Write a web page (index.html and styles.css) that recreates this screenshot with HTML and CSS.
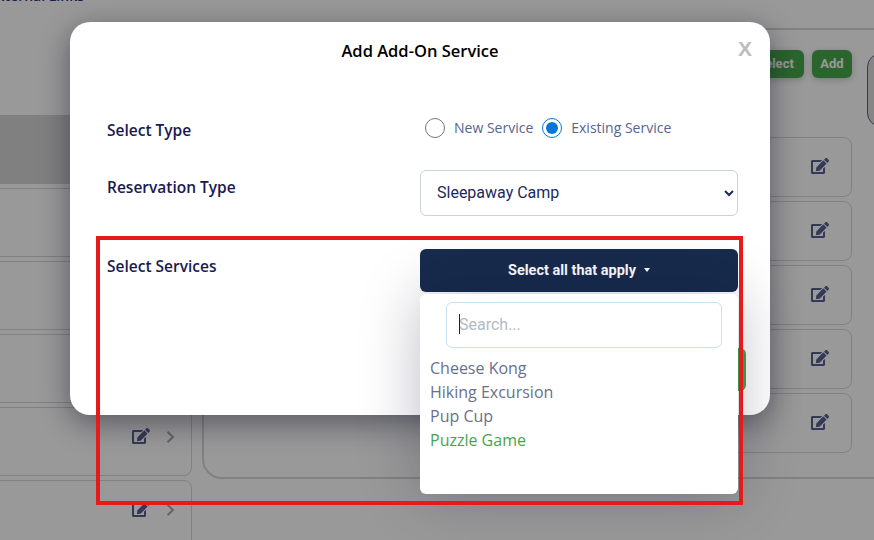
FILE: index.html
```html
<!DOCTYPE html>
<html lang="en">
<head>
<meta charset="utf-8">
<title>Add Add-On Service</title>
<link rel="stylesheet" href="styles.css">
</head>
<body>
<svg class="defs" aria-hidden="true">
  <symbol id="edit" viewBox="0 0 576 512"><path d="M402.6 83.2l90.2 90.2c3.8 3.8 3.8 10 0 13.8L274.4 405.6l-92.8 10.3c-12.4 1.4-22.9-9.1-21.5-21.5l10.3-92.8L388.8 83.2c3.8-3.8 10-3.8 13.8 0zm162-22.9l-48.8-48.8c-15.2-15.2-39.9-15.2-55.2 0l-35.4 35.4c-3.8 3.8-3.8 10 0 13.8l90.2 90.2c3.8 3.8 10 3.8 13.8 0l35.4-35.4c15.2-15.3 15.2-40 0-55.2zM384 346.2V448H64V128h229.8c3.2 0 6.2-1.3 8.5-3.5l40-40c7.6-7.6 2.2-20.5-8.5-20.5H48C21.5 64 0 85.5 0 112v352c0 26.5 21.5 48 48 48h352c26.5 0 48-21.5 48-48V306.2c0-10.7-12.9-16-20.5-8.5l-40 40c-2.2 2.3-3.5 5.3-3.5 8.5z"/></symbol>
  <symbol id="chev" viewBox="0 0 10 12"><path d="M1.5 .7l5.4 5.3-5.4 5.3" fill="none" stroke="currentColor" stroke-width="2"/></symbol>
</svg>

<div class="page">
  <aside class="sidebar">
    <div class="sidebar-title">External Links</div>
    <div class="band"></div>
    <div class="row"></div>
    <div class="row"></div>
    <div class="row"></div>
    <div class="row"><svg class="edit-icon"><use href="#edit"/></svg><svg class="chev-icon"><use href="#chev"/></svg></div>
    <div class="row"><svg class="edit-icon"><use href="#edit"/></svg><svg class="chev-icon"><use href="#chev"/></svg></div>
  </aside>
  <main class="panel">
    <div class="panel-main">
      <div class="toolbar">
        <button class="green-btn" type="button">Select</button>
        <button class="green-btn add-btn" type="button">Add</button>
      </div>
      <div class="cards">
        <div class="card"><svg class="edit-icon"><use href="#edit"/></svg></div>
        <div class="card"><svg class="edit-icon"><use href="#edit"/></svg></div>
        <div class="card"><svg class="edit-icon"><use href="#edit"/></svg></div>
        <div class="card"><svg class="edit-icon"><use href="#edit"/></svg></div>
        <div class="card"><svg class="edit-icon"><use href="#edit"/></svg></div>
      </div>
    </div>
    <div class="rail"></div>
  </main>
</div>

<div class="overlay"></div>

<section class="modal">
  <header class="modal-head">
    <h2 class="modal-title">Add Add-On Service</h2>
    <span class="modal-close">X</span>
  </header>

  <div class="form-row type-row">
    <div class="form-label">Select Type</div>
    <div class="form-control radios">
      <label class="radio"><input type="radio" name="type"> <span class="radio-text">New Service</span></label>
      <label class="radio"><input type="radio" name="type" checked> <span class="radio-text">Existing Service</span></label>
    </div>
  </div>

  <div class="form-row reservation-row">
    <div class="form-label offset">Reservation Type</div>
    <div class="form-control">
      <select class="native-select"><option>Sleepaway Camp</option></select>
    </div>
  </div>

  <div class="form-row">
    <div class="form-label offset">Select Services</div>
    <div class="form-control dropdown">
      <button class="dropdown-toggle" type="button">Select all that apply<span class="caret"></span></button>
      <div class="dropdown-menu">
        <div class="search-wrap">
          <input class="search" type="text" placeholder="Search...">
          <span class="text-cursor"></span>
        </div>
        <ul class="options">
          <li>Cheese Kong</li>
          <li>Hiking Excursion</li>
          <li>Pup Cup</li>
          <li class="selected">Puzzle Game</li>
        </ul>
      </div>
    </div>
  </div>

  <div class="modal-foot">
    <button class="save-btn" type="button">Save</button>
  </div>
</section>

<div class="annotation"></div>
</body>
</html>
```
FILE: styles.css
```css
* { box-sizing: border-box; }
html, body { margin: 0; height: 100%; overflow: hidden; background: #fff; }
body { width: 874px; height: 540px; position: relative; font-family: "Open Sans", "Liberation Sans", sans-serif; }
.defs { display: none; }

.page { display: flex; width: 874px; height: 540px; overflow: hidden; }

.sidebar { flex: none; width: 202px; margin-left: -10px; display: flex; flex-direction: column; gap: 4px; }
.sidebar-title { flex: none; height: 111px; margin: -13px 0 13px -11px; padding-left: 10px; font-size: 14px; line-height: 18px; font-weight: 600; color: #2d2f8c; white-space: nowrap; }
.band { flex: none; height: 69px; background: #d5d5d5; }
.row { flex: none; height: 69px; border: 1px solid #d8d8d8; border-radius: 8px; display: flex; align-items: flex-start; padding: 20px 0 0 141px; gap: 16px; }

.edit-icon { width: 18px; height: 16px; fill: #56608f; flex: none; }
.chev-icon { width: 10px; height: 12px; color: #a8a8a8; flex: none; margin-top: 3px; }

.panel { flex: none; width: 700px; height: 451px; margin: 28px 0 0 10px; border: 2px solid #d8d8d8; border-radius: 20px 0 0 20px; display: flex; }
.panel-main { flex: none; width: 648px; padding-top: 20px; }
.toolbar { display: flex; justify-content: flex-end; gap: 8px; height: 28px; }
.green-btn { width: 57px; height: 28px; border: 0; border-radius: 6px; background: #48a84d; color: #fff; font: 700 13px/28px Roboto, sans-serif; padding: 0; box-shadow: 0 2px 6px rgba(0,0,0,.2); }
.add-btn { width: 40px; }
.cards { margin: 59px 0 0 300px; display: flex; flex-direction: column; gap: 4px; }
.card { height: 60px; border: 1px solid #d8d8d8; border-radius: 8px; padding: 20px 22px 0 0; display: flex; justify-content: flex-end; }
.rail { flex: none; width: 40px; height: 74px; margin: 23px 0 0 15px; border: 1px solid #5a6280; border-radius: 14px; background: #e0e0e0; }

.overlay { position: absolute; inset: 0; background: rgba(0,0,0,.4); }

.modal { position: absolute; left: 70px; top: 22px; width: 700px; height: 393px; background: #fff; border-radius: 20px; padding: 0 32px 0 37px; box-shadow: 0 8px 30px rgba(10,10,30,.45); }
.modal-head { height: 58px; display: flex; align-items: center; justify-content: center; position: relative; margin: 0 -32px 38px -37px; }
.modal-title { margin: 0; font-size: 16.5px; line-height: 22px; font-weight: 600; color: #000; }
.modal-close { position: absolute; right: 18px; top: 15px; font: 700 21px/24px "Liberation Sans", sans-serif; color: #bdbdbd; }

.form-row { display: flex; justify-content: space-between; }
.type-row { margin-bottom: 28px; }
.reservation-row { margin-bottom: 33px; }
.form-label { font-size: 15.5px; line-height: 24px; font-weight: 600; color: #1a1a50; }
.form-label.offset { padding-top: 5px; }
.form-control { width: 318px; }

.radios { display: flex; align-items: flex-start; padding-left: 5px; gap: 9px; height: 24px; }
.radio { display: flex; align-items: center; gap: 9px; height: 20px; font-size: 14px; font-weight: 500; color: #56658a; white-space: nowrap; }
.radio input { width: 20px; height: 20px; margin: 0; flex: none; accent-color: #0b76d8; }
.radio-text { padding-bottom: 2px; }

.native-select { display: block; width: 100%; height: 46px; padding: 0 12px 2px; border: 1px solid #ccd1da; border-radius: 6px; background-color: #fff; color: #1c2a5c; font: 400 16px Roboto, sans-serif; }

.dropdown { position: relative; height: 43px; }
.dropdown-toggle { display: flex; align-items: center; justify-content: center; width: 100%; height: 43px; border: 0; border-radius: 6px; background: #172b4d; color: #fff; font: 700 14.5px Roboto, sans-serif; padding: 0 0 1px; }
.caret { display: inline-block; margin-left: 8px; border-top: 4px solid #fff; border-left: 3.5px solid transparent; border-right: 3.5px solid transparent; }

.dropdown-menu { position: absolute; left: 0; top: 45px; width: 318px; height: 200px; background: #fff; border-radius: 6px; padding: 8px 16px 0 10px; box-shadow: 0 0 60px rgba(20,20,50,.28); z-index: 2; }
.search-wrap { position: relative; margin-left: 16px; }
.search { display: block; width: 276px; height: 46px; padding: 0 12px 2px; border: 1px solid #c5e3f5; border-radius: 6px; font: 400 16px Roboto, sans-serif; color: #1c2a5c; outline: 0; background: #fff; }
.search::placeholder { color: #b4bac4; opacity: 1; }
.text-cursor { position: absolute; left: 13px; top: 12px; width: 1px; height: 20px; background: #1d1d57; }
.options { list-style: none; margin: 8px 0 0; padding: 0; font-size: 16px; line-height: 24px; color: #6a7189; }
.options .selected { color: #45a64b; }

.modal-foot { display: flex; justify-content: flex-end; margin: 56px -8px 0 0; }
.save-btn { width: 100px; height: 43px; border: 0; border-radius: 6px; background: #45a64b; color: #fff; font: 700 14px Roboto, sans-serif; }

.annotation { position: absolute; left: 96px; top: 236px; width: 647px; height: 269px; border: 4px solid #e31b1b; pointer-events: none; z-index: 5; }
```
